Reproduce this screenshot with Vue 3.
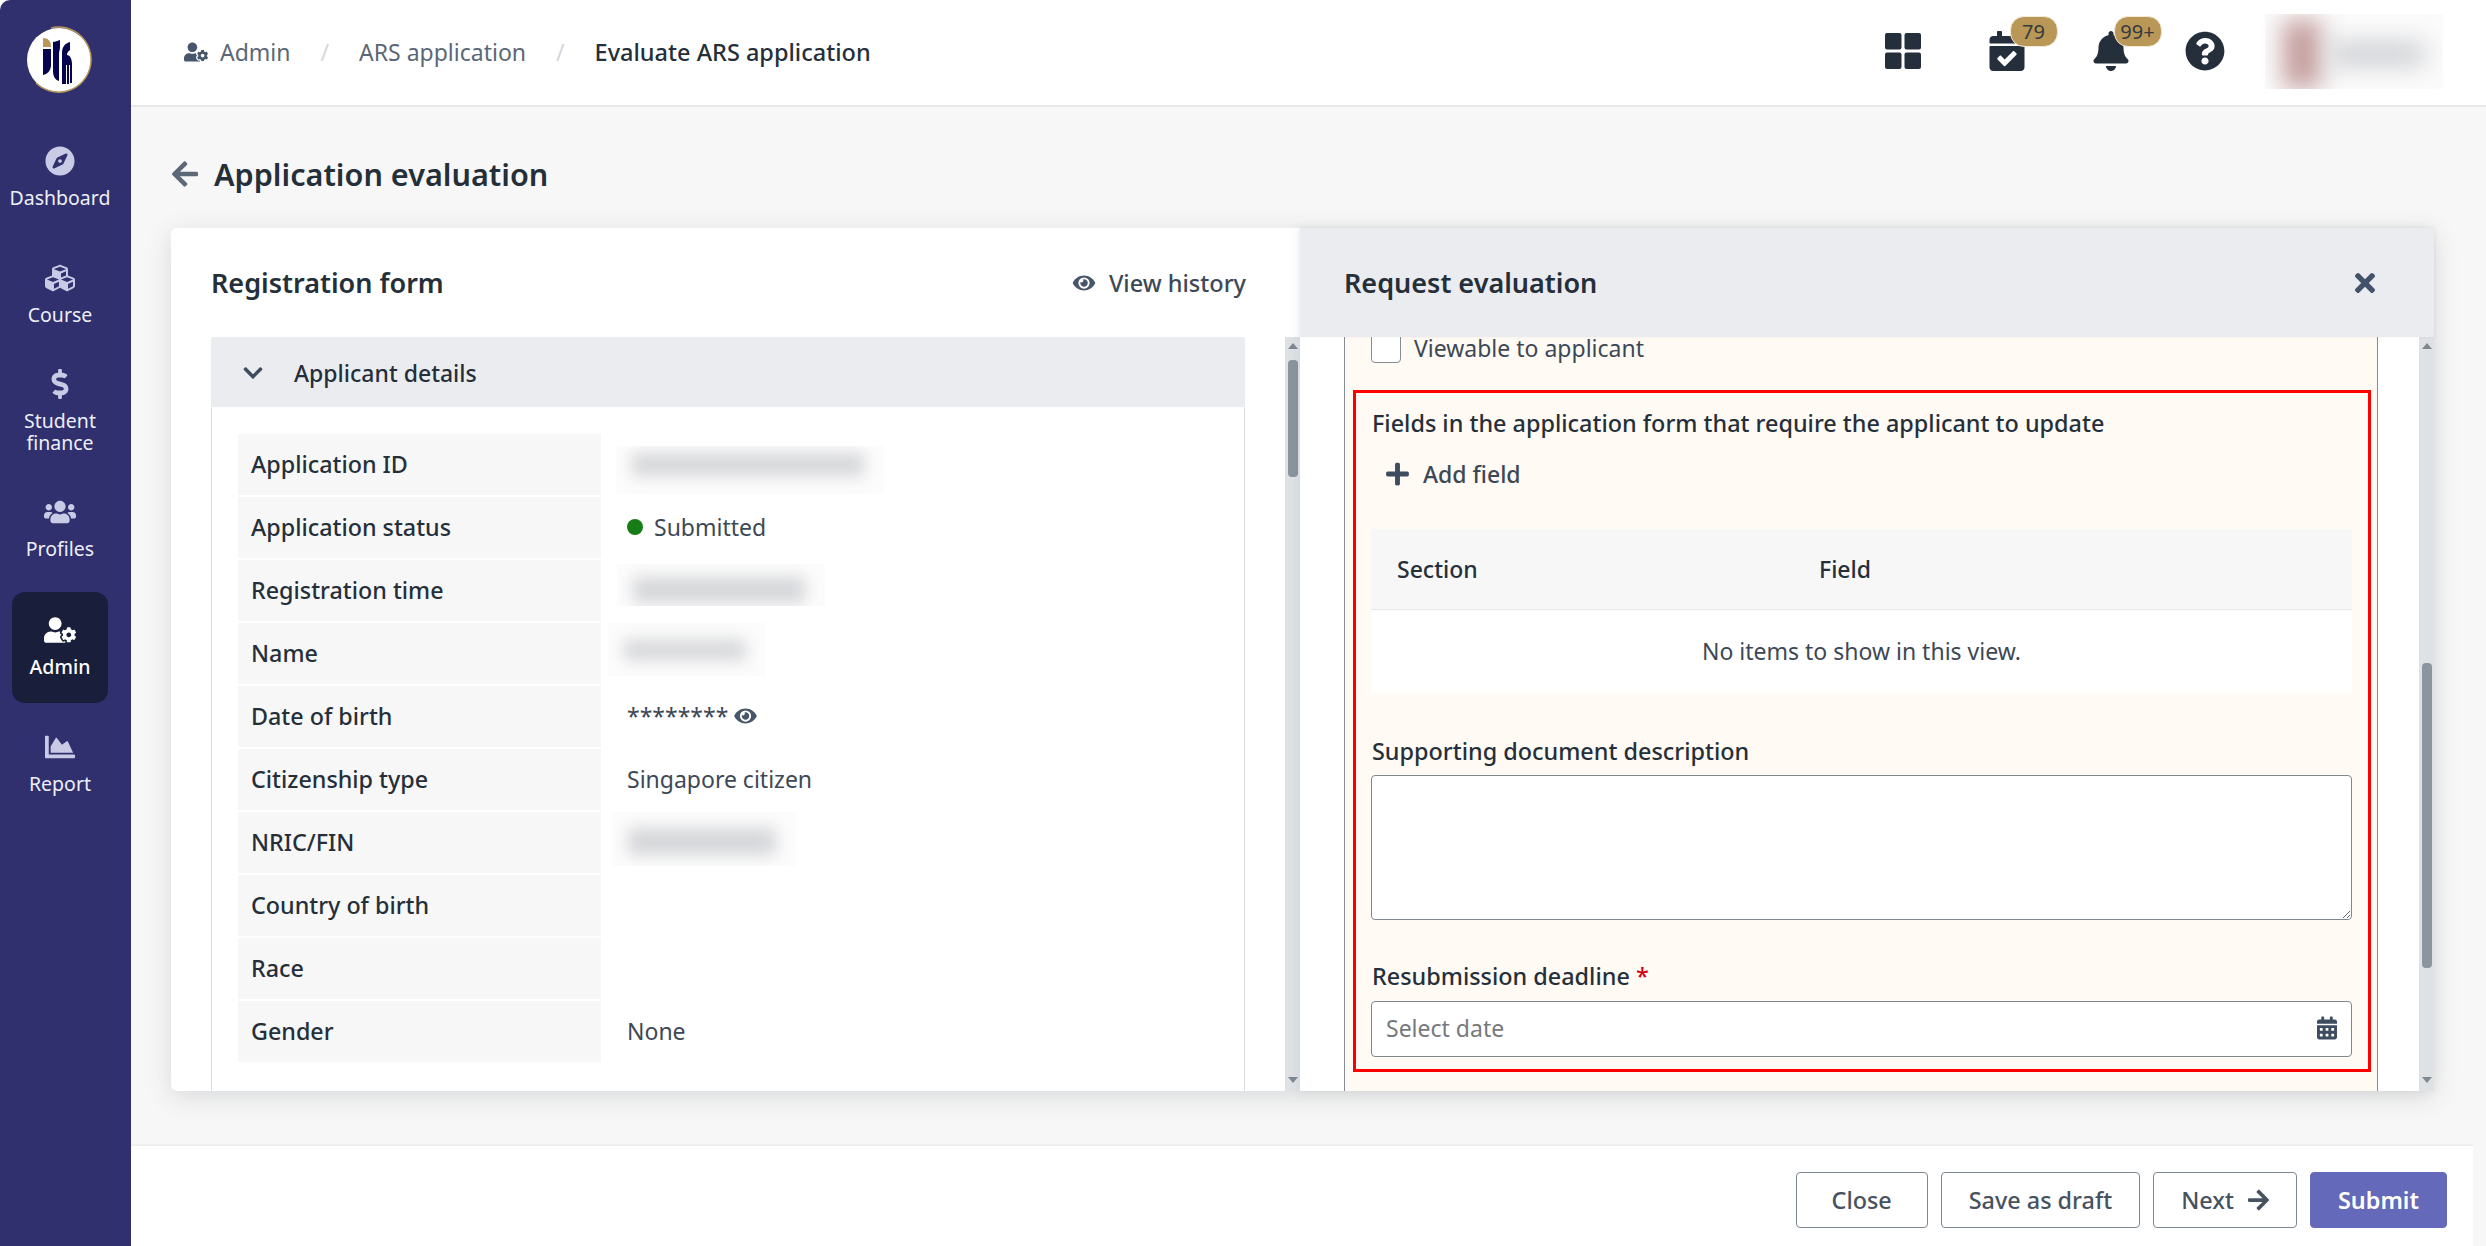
<template>
  <div class="app">
    <aside class="sidebar">
      <div class="logo">
        <svg viewBox="0 0 70 70" width="70" height="70">
          <circle cx="35" cy="35" r="32" fill="#fff" />
          <path d="M12 58A32.5 32.5 0 1 0 27 3" fill="none" stroke="#b89757" stroke-width="1.5" />
          <path d="M19 13c5 0 8 3 8 9h-8z" fill="#b89757" />
          <path d="M19 24h8v16c0 5-3 9-8 10z" fill="#05054f" />
          <path d="M29 17c0 0 5-1 7-2v7c0 3-1 4-1 8v26c-4-1-6-5-6-10z" fill="#05054f" />
          <path d="M38 28c0-7 4-10 8-11v8c-2 1-3 3-3 5 3 0 5 4 5 9v19h-2V40h-1v19h-2V40h-1v19h-4z" fill="#05054f" />
        </svg>
      </div>
      <nav class="nav">
        <a v-for="item in navItems" :key="item.label" class="nav-item" :class="{ active: item.active }">
          <svg class="nav-icon" :viewBox="item.icon.box"><path :d="item.icon.d" /></svg>
          <span>{{ item.label }}</span>
        </a>
      </nav>
    </aside>

    <div class="main">
      <header class="topbar">
        <div class="crumbs">
          <svg class="crumb-icon" :viewBox="icons.userCog.box"><path :d="icons.userCog.d" /></svg>
          <span class="crumb">Admin</span>
          <span class="sep">/</span>
          <span class="crumb">ARS application</span>
          <span class="sep">/</span>
          <span class="crumb current">Evaluate ARS application</span>
        </div>
        <div class="tools">
          <svg class="tool grid" viewBox="0 0 36 36">
            <rect x="0" y="0" width="16.5" height="16.5" rx="2" />
            <rect x="19.5" y="0" width="16.5" height="16.5" rx="2" />
            <rect x="0" y="19.5" width="16.5" height="16.5" rx="2" />
            <rect x="19.5" y="19.5" width="16.5" height="16.5" rx="2" />
          </svg>
          <div class="tool-wrap cal">
            <svg class="tool" :viewBox="icons.calendarCheck.box"><path :d="icons.calendarCheck.d" /></svg>
            <span class="badge">79</span>
          </div>
          <div class="tool-wrap bell">
            <svg class="tool" :viewBox="icons.bell.box"><path :d="icons.bell.d" /></svg>
            <span class="badge">99+</span>
          </div>
          <svg class="tool help" :viewBox="icons.question.box"><path :d="icons.question.d" /></svg>
          <div class="user-blur"><i></i><b></b></div>
        </div>
      </header>

      <main class="content">
        <div class="page-title">
          <svg class="back" :viewBox="icons.arrowLeft.box"><path :d="icons.arrowLeft.d" /></svg>
          <h1>Application evaluation</h1>
        </div>

        <div class="card">
          <section class="left">
            <div class="panel-head">
              <h2>Registration form</h2>
              <span class="history">
                <svg :viewBox="icons.eye.box"><path :d="icons.eye.d" /></svg>
                View history
              </span>
            </div>
            <div class="panel-body">
              <div class="left-scroll">
                <div class="details">
                  <div class="details-head">
                    <svg :viewBox="icons.chevron.box"><path :d="icons.chevron.d" /></svg>
                    <span>Applicant details</span>
                  </div>
                  <div class="rows">
                    <div v-for="row in rows" :key="row.label" class="row">
                      <div class="row-label">{{ row.label }}</div>
                      <div class="row-value">
                        <span v-if="row.blur" class="blur" :style="{ width: row.blur[0] + 'px', height: row.blur[1] + 'px', marginLeft: row.blur[2] + 'px', marginTop: row.blur[3] + 'px' }">
                          <i :style="{ top: row.blur[4] + 'px', bottom: row.blur[5] + 'px' }"></i>
                        </span>
                        <template v-else-if="row.status">
                          <span class="dot"></span>{{ row.value }}
                        </template>
                        <template v-else-if="row.masked">
                          <span class="stars">{{ row.value }}</span>
                          <svg class="mini-eye" :viewBox="icons.eye.box"><path :d="icons.eye.d" /></svg>
                        </template>
                        <template v-else>{{ row.value }}</template>
                      </div>
                    </div>
                  </div>
                </div>
              </div>
              <div class="scrollbar">
                <span class="arrow up"></span>
                <span class="thumb thumb-left"></span>
                <span class="arrow down"></span>
              </div>
            </div>
          </section>

          <section class="right">
            <div class="panel-head right-head">
              <h2>Request evaluation</h2>
              <svg class="close" :viewBox="icons.times.box"><path :d="icons.times.d" /></svg>
            </div>
            <div class="panel-body">
              <div class="right-scroll">
                <div class="form-box">
                  <label class="check-row">
                    <span class="checkbox"></span>
                    Viewable to applicant
                  </label>
                  <div class="red-box">
                    <div class="field-label">Fields in the application form that require the applicant to update</div>
                    <div class="add-field">
                      <svg :viewBox="icons.plus.box"><path :d="icons.plus.d" /></svg>
                      Add field
                    </div>
                    <div class="table">
                      <div class="table-head">
                        <span class="col-section">Section</span>
                        <span>Field</span>
                      </div>
                      <div class="table-empty">No items to show in this view.</div>
                    </div>
                    <div class="field-label doc-label">Supporting document description</div>
                    <textarea class="textarea"></textarea>
                    <div class="field-label date-label">Resubmission deadline <em>*</em></div>
                    <div class="date-input">
                      <span>Select date</span>
                      <svg :viewBox="icons.calendar.box"><path :d="icons.calendar.d" /></svg>
                    </div>
                  </div>
                </div>
              </div>
              <div class="scrollbar">
                <span class="arrow up"></span>
                <span class="thumb thumb-right"></span>
                <span class="arrow down"></span>
              </div>
            </div>
          </section>
        </div>
      </main>

      <footer class="footer">
        <button class="btn">Close</button>
        <button class="btn">Save as draft</button>
        <button class="btn">
          Next
          <svg :viewBox="icons.arrowRight.box"><path :d="icons.arrowRight.d" /></svg>
        </button>
        <button class="btn primary">Submit</button>
      </footer>
    </div>
  </div>
</template>

<script setup>
const icons = {
  compass: { box: '0 0 496 512', d: 'M225.38 233.37c-12.5 12.5-12.5 32.76 0 45.25 12.49 12.5 32.76 12.5 45.25 0 12.5-12.5 12.5-32.76 0-45.25-12.5-12.49-32.76-12.49-45.25 0zM248 8C111.03 8 0 119.03 0 256s111.03 248 248 248 248-111.03 248-248S384.97 8 248 8zm126.14 148.05L308.17 300.4a31.938 31.938 0 0 1-15.77 15.77l-144.34 65.97c-16.65 7.61-33.81-9.55-26.2-26.2l65.98-144.35a31.938 31.938 0 0 1 15.77-15.77l144.34-65.97c16.65-7.6 33.8 9.55 26.19 26.2z' },
  cubes: { box: '0 0 512 512', d: 'M488.6 250.2L392 214V105.5c0-15-9.3-28.4-23.4-33.7l-100-37.5c-8.1-3.1-17.1-3.1-25.3 0l-100 37.5c-14.1 5.3-23.4 18.7-23.4 33.7V214l-96.6 36.2C9.3 255.5 0 268.9 0 283.9V394c0 13.6 7.7 26.1 19.9 32.2l100 50c10.1 5.1 22.1 5.1 32.2 0l103.9-52 103.9 52c10.1 5.1 22.1 5.1 32.2 0l100-50c12.2-6.1 19.9-18.6 19.9-32.2V283.9c0-15-9.3-28.4-23.4-33.7zM358 214.8l-85 31.9v-68.2l85-37v73.3zM154 104.1l102-38.2 102 38.2v.6l-102 41.4-102-41.4v-.6zm84 291.1l-85 42.5v-79.1l85-38.8v75.4zm0-112l-102 41.4-102-41.4v-.6l102-38.2 102 38.2v.6zm240 112l-85 42.5v-79.1l85-38.8v75.4zm0-112l-102 41.4-102-41.4v-.6l102-38.2 102 38.2v.6z' },
  dollar: { box: '0 0 288 512', d: 'M209.2 233.4l-108-31.6C88.7 198.2 80 186.5 80 173.5c0-16.3 13.2-29.5 29.5-29.5h66.3c12.2 0 24.2 3.7 34.2 10.5 6.1 4.1 14.3 3.1 19.5-2l34.8-34c7.1-6.9 6.1-18.4-1.8-24.5C238 74.8 207.4 64.1 176 64V16c0-8.8-7.2-16-16-16h-32c-8.8 0-16 7.2-16 16v48h-2.5C45.8 64-5.4 118.7.5 183.6c4.2 46.1 39.4 83.6 83.8 96.6l102.5 30c12.5 3.7 21.2 15.3 21.2 28.3 0 16.3-13.2 29.5-29.5 29.5h-66.3C100 368 88 364.3 78 357.5c-6.1-4.1-14.3-3.1-19.5 2l-34.8 34c-7.1 6.9-6.1 18.4 1.8 24.5 24.5 19.2 55.1 29.9 86.5 30v48c0 8.8 7.2 16 16 16h32c8.8 0 16-7.2 16-16v-48.2c46.6-.9 90.3-28.6 105.7-72.7 21.5-61.6-14.6-124.8-72.5-141.7z' },
  users: { box: '0 0 640 512', d: 'M96 224c35.3 0 64-28.7 64-64s-28.7-64-64-64-64 28.7-64 64 28.7 64 64 64zm448 0c35.3 0 64-28.7 64-64s-28.7-64-64-64-64 28.7-64 64 28.7 64 64 64zm32 32h-64c-17.6 0-33.5 7.1-45.1 18.6 40.3 22.1 68.9 62 75.1 109.4h66c17.7 0 32-14.3 32-32v-32c0-35.3-28.7-64-64-64zm-256 0c61.9 0 112-50.1 112-112S381.9 32 320 32 208 82.1 208 144s50.1 112 112 112zm76.8 32h-8.3c-20.8 10-43.9 16-68.5 16s-47.6-6-68.5-16h-8.3C179.6 288 128 339.6 128 403.2V432c0 26.5 21.5 48 48 48h288c26.5 0 48-21.5 48-48v-28.8c0-63.6-51.6-115.2-115.2-115.2zm-223.7-13.4C161.5 263.1 145.6 256 128 256H64c-35.3 0-64 28.7-64 64v32c0 17.7 14.3 32 32 32h65.9c6.3-47.4 34.9-87.3 75.2-109.4z' },
  userCog: { box: '0 0 640 512', d: 'M610.5 373.3c2.6-14.1 2.6-28.5 0-42.6l25.8-14.9c3-1.7 4.3-5.2 3.3-8.5-6.7-21.6-18.2-41.2-33.2-57.4-2.3-2.5-6-3.1-9-1.4l-25.8 14.9c-10.9-9.3-23.4-16.5-36.9-21.3v-29.8c0-3.4-2.4-6.4-5.7-7.1-22.3-5-45-4.8-66.2 0-3.3.7-5.7 3.7-5.7 7.1v29.8c-13.5 4.8-26 12-36.9 21.3l-25.8-14.9c-2.9-1.7-6.7-1.1-9 1.4-15 16.2-26.5 35.8-33.2 57.4-1 3.3.4 6.8 3.3 8.5l25.8 14.9c-2.6 14.1-2.6 28.5 0 42.6l-25.8 14.9c-3 1.7-4.3 5.2-3.3 8.5 6.7 21.6 18.2 41.1 33.2 57.4 2.3 2.5 6 3.1 9 1.4l25.8-14.9c10.9 9.3 23.4 16.5 36.9 21.3v29.8c0 3.4 2.4 6.4 5.7 7.1 22.3 5 45 4.8 66.2 0 3.3-.7 5.7-3.7 5.7-7.1v-29.8c13.5-4.8 26-12 36.9-21.3l25.8 14.9c2.9 1.7 6.7 1.1 9-1.4 15-16.2 26.5-35.8 33.2-57.4 1-3.3-.4-6.8-3.3-8.5l-25.8-14.9zM496 400.5c-26.8 0-48.5-21.8-48.5-48.5s21.8-48.5 48.5-48.5 48.5 21.8 48.5 48.5-21.7 48.5-48.5 48.5zM224 256c70.7 0 128-57.3 128-128S294.7 0 224 0 96 57.3 96 128s57.3 128 128 128zm201.2 226.5c-2.3-1.2-4.6-2.6-6.8-3.9l-7.9 4.6c-6 3.4-12.8 5.3-19.6 5.3-10.9 0-21.4-4.6-28.9-12.6-18.3-19.8-32.3-43.9-40.2-69.6-5.5-17.7 1.9-36.4 17.9-45.7l7.9-4.6c-.1-2.6-.1-5.2 0-7.8l-7.9-4.6c-16-9.2-23.4-28-17.9-45.7.9-2.9 2.2-5.8 3.2-8.7-3.8-.3-7.5-1.2-11.4-1.2h-16.7c-22.2 10.2-46.9 16-72.9 16s-50.6-5.8-72.9-16h-16.7C60.2 288 0 348.2 0 422.4V464c0 26.5 21.5 48 48 48h352c10.1 0 19.5-3.2 27.2-8.5-1.2-3.8-2-7.7-2-11.8v-9.2z' },
  chart: { box: '0 0 512 512', d: 'M500 384c6.6 0 12 5.4 12 12v40c0 6.6-5.4 12-12 12H12c-6.6 0-12-5.4-12-12V76c0-6.6 5.4-12 12-12h40c6.6 0 12 5.4 12 12v308h436zM372.7 159.5L288 216l-85.3-113.7c-5.1-6.8-15.5-6.3-19.9 1L96 248v104h384l-89.9-187.8c-3.2-6.5-11.4-8.7-17.4-4.7z' },
  eye: { box: '0 0 576 512', d: 'M572.52 241.4C518.29 135.59 410.93 64 288 64S57.68 135.64 3.48 241.41a32.35 32.35 0 0 0 0 29.19C57.71 376.41 165.07 448 288 448s230.32-71.64 284.52-177.41a32.35 32.35 0 0 0 0-29.19zM288 400a144 144 0 1 1 144-144 143.93 143.93 0 0 1-144 144zm0-240a95.31 95.31 0 0 0-25.31 3.79 47.85 47.85 0 0 1-66.9 66.9A95.78 95.78 0 1 0 288 160z' },
  question: { box: '0 0 512 512', d: 'M504 256c0 136.997-111.043 248-248 248S8 392.997 8 256C8 119.083 119.043 8 256 8s248 111.083 248 248zM262.655 90c-54.497 0-89.255 22.957-116.549 63.758-3.536 5.286-2.353 12.415 2.715 16.258l34.699 26.31c5.205 3.947 12.621 3.008 16.665-2.122 17.864-22.658 30.113-35.797 57.303-35.797 20.429 0 45.698 13.148 45.698 32.958 0 14.976-12.363 22.667-32.534 33.976C247.128 238.528 216 254.941 216 296v4c0 6.627 5.373 12 12 12h56c6.627 0 12-5.373 12-12v-1.333c0-28.462 83.186-29.647 83.186-106.667 0-58.002-60.165-102-116.531-102zM256 338c-25.365 0-46 20.635-46 46 0 25.364 20.635 46 46 46s46-20.636 46-46c0-25.365-20.635-46-46-46z' },
  bell: { box: '0 0 448 512', d: 'M224 512c35.32 0 63.97-28.65 63.97-64H160.03c0 35.35 28.65 64 63.97 64zm215.39-149.71c-19.32-20.76-55.47-51.99-55.47-154.29 0-77.7-54.48-139.9-127.94-155.16V32c0-17.67-14.32-32-31.98-32s-31.98 14.33-31.98 32v20.84C118.56 68.1 64.08 130.3 64.08 208c0 102.3-36.15 133.53-55.47 154.29-6 6.45-8.66 14.16-8.61 21.71.11 16.4 12.98 32 32.1 32h383.8c19.12 0 32-15.6 32.1-32 .05-7.55-2.61-15.27-8.61-21.71z' },
  calendarCheck: { box: '0 0 448 512', d: 'M436 160H12c-6.627 0-12-5.373-12-12v-36c0-26.51 21.49-48 48-48h48V12c0-6.627 5.373-12 12-12h40c6.627 0 12 5.373 12 12v52h128V12c0-6.627 5.373-12 12-12h40c6.627 0 12 5.373 12 12v52h48c26.51 0 48 21.49 48 48v36c0 6.627-5.373 12-12 12zM12 192h424c6.627 0 12 5.373 12 12v260c0 26.51-21.49 48-48 48H48c-26.51 0-48-21.49-48-48V204c0-6.627 5.373-12 12-12zm333.296 95.947l-28.169-28.398c-4.667-4.705-12.265-4.736-16.97-.068L194.12 364.665l-45.98-46.352c-4.667-4.705-12.266-4.736-16.971-.068l-28.397 28.17c-4.705 4.667-4.736 12.265-.068 16.97l82.601 83.269c4.667 4.705 12.265 4.736 16.97.068l142.953-141.805c4.705-4.667 4.736-12.265.068-16.97z' },
  calendar: { box: '0 0 448 512', d: 'M0 464c0 26.5 21.5 48 48 48h352c26.5 0 48-21.5 48-48V192H0v272zm320-196c0-6.6 5.4-12 12-12h40c6.6 0 12 5.4 12 12v40c0 6.6-5.4 12-12 12h-40c-6.6 0-12-5.4-12-12v-40zm0 128c0-6.6 5.4-12 12-12h40c6.6 0 12 5.4 12 12v40c0 6.6-5.4 12-12 12h-40c-6.6 0-12-5.4-12-12v-40zM192 268c0-6.6 5.4-12 12-12h40c6.6 0 12 5.4 12 12v40c0 6.6-5.4 12-12 12h-40c-6.6 0-12-5.4-12-12v-40zm0 128c0-6.6 5.4-12 12-12h40c6.6 0 12 5.4 12 12v40c0 6.6-5.4 12-12 12h-40c-6.6 0-12-5.4-12-12v-40zM64 268c0-6.6 5.4-12 12-12h40c6.6 0 12 5.4 12 12v40c0 6.6-5.4 12-12 12H76c-6.6 0-12-5.4-12-12v-40zm0 128c0-6.6 5.4-12 12-12h40c6.6 0 12 5.4 12 12v40c0 6.6-5.4 12-12 12H76c-6.6 0-12-5.4-12-12v-40zM400 64h-48V16c0-8.8-7.2-16-16-16h-32c-8.8 0-16 7.2-16 16v48H160V16c0-8.8-7.2-16-16-16h-32c-8.8 0-16 7.2-16 16v48H48C21.5 64 0 85.5 0 112v48h448v-48c0-26.5-21.5-48-48-48z' },
  times: { box: '0 0 352 512', d: 'M242.72 256l100.07-100.07c12.28-12.28 12.28-32.19 0-44.48l-22.24-22.24c-12.28-12.28-32.19-12.28-44.48 0L176 189.28 75.93 89.21c-12.28-12.28-32.19-12.28-44.48 0L9.21 111.45c-12.28 12.28-12.28 32.19 0 44.48L109.28 256 9.21 356.07c-12.28 12.28-12.28 32.19 0 44.48l22.24 22.24c12.28 12.28 32.2 12.28 44.48 0L176 322.72l100.07 100.07c12.28 12.28 32.2 12.28 44.48 0l22.24-22.24c12.28-12.28 12.28-32.19 0-44.48L242.72 256z' },
  arrowLeft: { box: '0 0 448 512', d: 'M257.5 445.1l-22.2 22.2c-9.4 9.4-24.6 9.4-33.9 0L7 273c-9.4-9.4-9.4-24.6 0-33.9L201.4 44.7c9.4-9.4 24.6-9.4 33.9 0l22.2 22.2c9.5 9.5 9.3 25-.4 34.3L136.6 216H424c13.3 0 24 10.7 24 24v32c0 13.3-10.7 24-24 24H136.6l120.5 114.8c9.8 9.3 10 24.8.4 34.3z' },
  arrowRight: { box: '0 0 448 512', d: 'M190.5 66.9l22.2-22.2c9.4-9.4 24.6-9.4 33.9 0L441 239c9.4 9.4 9.4 24.6 0 33.9L246.6 467.3c-9.4 9.4-24.6 9.4-33.9 0l-22.2-22.2c-9.5-9.5-9.3-25 .4-34.3L311.4 296H24c-13.3 0-24-10.7-24-24v-32c0-13.3 10.7-24 24-24h287.4L190.9 101.2c-9.8-9.3-10-24.8-.4-34.3z' },
  chevron: { box: '0 0 448 512', d: 'M207.029 381.476L12.686 187.132c-9.373-9.373-9.373-24.569 0-33.941l22.667-22.667c9.357-9.357 24.522-9.375 33.901-.04L224 284.505l154.745-154.021c9.379-9.335 24.544-9.317 33.901.04l22.667 22.667c9.373 9.373 9.373 24.569 0 33.941L240.971 381.476c-9.373 9.372-24.569 9.372-33.942 0z' },
  plus: { box: '0 0 448 512', d: 'M416 208H272V64c0-17.67-14.33-32-32-32h-32c-17.67 0-32 14.33-32 32v144H32c-17.67 0-32 14.33-32 32v32c0 17.67 14.33 32 32 32h144v144c0 17.67 14.33 32 32 32h32c17.67 0 32-14.33 32-32V304h144c17.67 0 32-14.33 32-32v-32c0-17.67-14.33-32-32-32z' }
}

const navItems = [
  { label: 'Dashboard', icon: icons.compass },
  { label: 'Course', icon: icons.cubes },
  { label: 'Student finance', icon: icons.dollar },
  { label: 'Profiles', icon: icons.users },
  { label: 'Admin', icon: icons.userCog, active: true },
  { label: 'Report', icon: icons.chart }
]

// blur: [width, height, left offset, top offset, blob top, blob bottom] of the redacted patch
const rows = [
  { label: 'Application ID', blur: [268, 48, -11, 12, 7, 18] },
  { label: 'Application status', value: 'Submitted', status: true },
  { label: 'Registration time', blur: [208, 42, -10, 4, 13, 3] },
  { label: 'Name', blur: [158, 53, -19, 0, 17, 16] },
  { label: 'Date of birth', value: '********', masked: true },
  { label: 'Citizenship type', value: 'Singapore citizen' },
  { label: 'NRIC/FIN', blur: [184, 54, -15, 0, 16, 11] },
  { label: 'Country of birth', value: '' },
  { label: 'Race', value: '' },
  { label: 'Gender', value: 'None' }
]
</script>

<style scoped>
.app {
  display: flex;
  width: 2486px;
  height: 1246px;
  overflow: hidden;
  background: #fff;
  font-family: "Noto Sans", "Open Sans", sans-serif;
  font-size: 23px;
  color: #252f3a;
}

/* sidebar */
.sidebar {
  flex: 0 0 131px;
  background: #2f306d;
  border-top-left-radius: 10px;
}
.logo {
  height: 123px;
  padding: 25px 0 0 24px;
  box-sizing: border-box;
}
.nav {
  display: flex;
  flex-direction: column;
  gap: 6.3px;
  align-items: center;
  width: 120px;
}
.nav-item {
  display: flex;
  flex-direction: column;
  align-items: center;
  justify-content: center;
  gap: 11px;
  box-sizing: border-box;
  height: 111px;
  width: 120px;
  padding-bottom: 3px;
  border-radius: 13px;
  font-size: 19.5px;
  line-height: 22px;
  text-align: center;
  color: #eeeef8;
}
.nav-icon {
  height: 30px;
  width: 32px;
  fill: #c9cae5;
}
.nav-item.active {
  width: 96px;
  background: #191e3b;
  color: #fff;
  font-weight: 500;
}
.nav-item.active .nav-icon {
  fill: #fff;
}

/* top bar */
.main {
  flex: 1;
  min-width: 0;
  display: flex;
  flex-direction: column;
  background: #f7f7f7;
}
.topbar {
  flex: 0 0 107px;
  box-sizing: border-box;
  display: flex;
  align-items: center;
  justify-content: space-between;
  background: #fff;
  border-bottom: 2px solid #e8e9ea;
  padding-left: 53px;
}
.crumbs {
  display: flex;
  align-items: center;
  padding-bottom: 2px;
}
.crumb-icon {
  width: 24px;
  height: 20px;
  fill: #47566a;
  margin-right: 12px;
}
.crumb {
  color: #5b6775;
}
.crumb.current {
  color: #252f3a;
  font-size: 23.5px;
  font-weight: 500;
}
.sep {
  color: #d5d7da;
  margin: 0 30px;
}
.tools {
  display: flex;
  align-items: center;
  box-sizing: border-box;
  height: 100%;
  padding: 0 43px 3px 0;
}
.tool {
  display: block;
  fill: #242f3b;
  width: 36px;
  height: 40px;
}
.grid {
  height: 36px;
  margin-right: 68px;
}
.tool-wrap {
  position: relative;
}
.cal {
  margin-right: 68px;
}
.bell {
  margin-right: 56.5px;
}
.badge {
  position: absolute;
  left: 21px;
  top: -15px;
  width: 48px;
  height: 31px;
  border-radius: 14px;
  background: #b99756;
  border: 1px solid #f3ead8;
  box-sizing: border-box;
  font-size: 20px;
  line-height: 29px;
  text-align: center;
  color: #343a40;
}
.help {
  width: 40px;
  margin-right: 40px;
}
.user-blur {
  position: relative;
  overflow: hidden;
  align-self: center;
  width: 178px;
  height: 75px;
  background: #fbfbfb;
}
.user-blur i,
.user-blur b {
  position: absolute;
  display: block;
  filter: blur(12px);
}
.user-blur i {
  left: 18px;
  top: 6px;
  width: 38px;
  height: 68px;
  background: #c49d9d;
}
.user-blur b {
  left: 65px;
  top: 28px;
  width: 95px;
  height: 24px;
  background: #cdcfd3;
}

/* page */
.content {
  flex: 1;
  min-height: 0;
  box-sizing: border-box;
  display: flex;
  flex-direction: column;
  padding: 0 52px 53px 40px;
}
.page-title {
  flex: 0 0 121px;
  display: flex;
  align-items: center;
  gap: 16px;
  padding: 12px 0 0 1px;
  box-sizing: border-box;
}
.back {
  width: 26px;
  height: 30px;
  fill: #5c6878;
}
h1 {
  margin: 0;
  font-size: 30.6px;
  font-weight: 600;
  color: #252f3a;
}
.card {
  flex: 1;
  min-height: 0;
  display: flex;
  background: #fff;
  border-radius: 6px;
  box-shadow: 0 6px 26px rgba(60, 70, 80, 0.16);
}
.left {
  flex: 0 0 1129px;
  display: flex;
  flex-direction: column;
  min-width: 0;
}
.right {
  flex: 1;
  display: flex;
  flex-direction: column;
  min-width: 0;
}
.panel-head {
  flex: 0 0 109px;
  box-sizing: border-box;
  display: flex;
  align-items: center;
  justify-content: space-between;
  padding: 0 54px 0 40px;
}
h2 {
  margin: 0;
  font-size: 27px;
  font-weight: 600;
  color: #252f3a;
}
.history {
  display: flex;
  align-items: center;
  gap: 13px;
  font-size: 23.5px;
  font-weight: 500;
  color: #3d4856;
}
.history svg {
  width: 24px;
  height: 20px;
  fill: #47566a;
}
.panel-body {
  flex: 1;
  min-height: 0;
  display: flex;
}
.left-scroll {
  flex: 1;
  min-width: 0;
  padding: 0 40px;
  display: flex;
}
.details {
  flex: 1;
  min-width: 0;
  border: solid #dddee0;
  border-width: 0 1px;
}
.details-head {
  display: flex;
  align-items: center;
  height: 70px;
  margin: 0 -1px;
  padding: 1px 0 0 32px;
  box-sizing: border-box;
  background: #ebecf0;
  font-weight: 500;
}
.details-head svg {
  width: 20px;
  height: 22px;
  fill: #3d4c5f;
  margin-right: 31px;
}
.rows {
  display: flex;
  flex-direction: column;
  gap: 2px;
  padding: 27px 26px 0;
}
.row {
  display: flex;
  height: 61px;
}
.row-label {
  flex: 0 0 350px;
  padding-left: 13px;
  background: #f7f7f7;
  font-size: 23.3px;
  font-weight: 500;
  line-height: 61px;
}
.row-value {
  flex: 1;
  padding: 0 0 2px 26px;
  display: flex;
  align-items: center;
  color: #3d4856;
  min-width: 0;
}
.blur {
  position: relative;
  align-self: flex-start;
  overflow: hidden;
  background: #fcfcfc;
  flex-shrink: 0;
}
.blur i {
  position: absolute;
  left: 16px;
  right: 20px;
  background: #d5d6d9;
  filter: blur(8px);
}
.dot {
  width: 16px;
  height: 16px;
  border-radius: 50%;
  background: #177e17;
  margin-right: 11px;
}
.stars {
  margin-right: 6px;
}
.mini-eye {
  width: 23px;
  height: 20px;
  fill: #47566a;
}
.scrollbar {
  flex: 0 0 15px;
  display: flex;
  flex-direction: column;
  align-items: center;
  background: #dfe2e5;
}
.arrow {
  width: 0;
  height: 0;
  border-left: 5px solid transparent;
  border-right: 5px solid transparent;
}
.arrow.up {
  margin-top: 6px;
  border-bottom: 6px solid #7f8992;
}
.arrow.down {
  margin-top: auto;
  margin-bottom: 8px;
  border-top: 6px solid #7f8992;
}
.thumb {
  width: 10px;
  border-radius: 4px;
  background: #8b959d;
}
.thumb-left {
  height: 117px;
  margin-top: 11px;
}
.thumb-right {
  height: 305px;
  margin-top: 314px;
}

/* right panel */
.right {
  box-shadow: -2px 0 10px rgba(60, 70, 80, 0.08);
  position: relative;
}
.right-head {
  background: #ebecf0;
  padding: 0 59px 0 44px;
  position: relative;
  z-index: 1;
  box-shadow: 0 0 4px rgba(60, 70, 80, 0.06);
}
.close {
  width: 20px;
  height: 30px;
  fill: #41526a;
}
.right-scroll {
  flex: 1;
  min-width: 0;
  padding: 0 41px 0 44px;
  display: flex;
}
.form-box {
  flex: 1;
  min-width: 0;
  box-sizing: border-box;
  background: #fffaf3;
  border: solid #868c93;
  border-width: 0 1px;
  padding: 0 6px 0 8px;
}
.check-row {
  display: flex;
  align-items: center;
  gap: 13px;
  height: 30px;
  line-height: 24px;
  margin: -4px 0 27px 18px;
  color: #3d4856;
}
.checkbox {
  width: 30px;
  height: 30px;
  box-sizing: border-box;
  background: #fff;
  border: 1px solid #868c93;
  border-radius: 4px;
}
.red-box {
  box-sizing: border-box;
  height: 682px;
  border: 3px solid #f00;
  padding: 13px 16px 0 15px;
}
.field-label {
  font-size: 23.4px;
  font-weight: 500;
  line-height: 34px;
  height: 34px;
  padding-left: 1px;
}
.add-field {
  display: flex;
  align-items: center;
  gap: 14px;
  height: 46px;
  margin: 11px 0 32px 15px;
  font-weight: 500;
  color: #3d4856;
}
.add-field svg {
  width: 23px;
  height: 26px;
  fill: #3d4c5f;
}
.table {
  background: #fff;
}
.table-head {
  display: flex;
  align-items: center;
  height: 81px;
  background: #f7f7f7;
  border-bottom: 1px solid #e8e9ea;
  box-sizing: border-box;
  font-weight: 500;
  padding-left: 26px;
}
.col-section {
  width: 422px;
}
.table-empty {
  height: 83px;
  line-height: 83px;
  text-align: center;
  color: #3d4856;
}
.doc-label {
  margin-top: 41px;
}
.textarea {
  display: block;
  box-sizing: border-box;
  width: 100%;
  height: 145px;
  margin-top: 7px;
  border: 1.5px solid #80878f;
  border-radius: 4px;
  background: #fff;
  outline: none;
}
.date-label {
  margin-top: 39px;
}
.date-label em {
  font-style: normal;
  color: #d0021b;
}
.date-input {
  display: flex;
  align-items: center;
  justify-content: space-between;
  box-sizing: border-box;
  height: 56px;
  margin-top: 8px;
  padding: 0 14px 2px 14px;
  background: #fff;
  border: 1.5px solid #80878f;
  border-radius: 4px;
  color: #77797c;
}
.date-input svg {
  width: 20px;
  height: 24px;
  fill: #3d4c5f;
}

/* footer */
.footer {
  flex: 0 0 102px;
  box-sizing: border-box;
  display: flex;
  justify-content: flex-end;
  align-items: flex-start;
  gap: 13px;
  margin-right: 13px;
  padding: 26px 26px 0 0;
  background: #fff;
  border-top: 2px solid #eeeff0;
}
.btn {
  display: flex;
  align-items: center;
  justify-content: center;
  gap: 14px;
  box-sizing: border-box;
  height: 56px;
  min-width: 132px;
  padding: 0 27px;
  background: #fff;
  border: 1.5px solid #7d8893;
  border-radius: 4px;
  font-family: inherit;
  font-size: 23.4px;
  font-weight: 500;
  color: #475260;
}
.btn svg {
  width: 21px;
  height: 24px;
  fill: #475260;
}
.btn.primary {
  background: #6569b9;
  border-color: #6569b9;
  color: #fff;
  font-weight: 600;
}
</style>
